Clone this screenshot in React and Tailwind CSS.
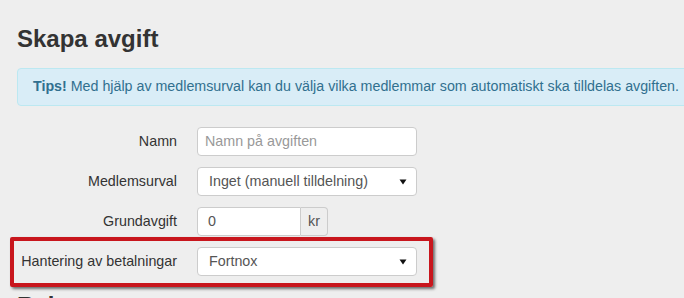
const Caret = () => (
  <svg width="8" height="6" viewBox="0 0 8 6" className="shrink-0">
    <path d="M0.5 0.5 L7.5 0.5 L4 5.5 Z" fill="#111" />
  </svg>
);

const Row = ({ label, children }) => (
  <div className="flex items-center h-[29px] mb-[11px]">
    <label className="w-[160px] text-right text-[14.3px] text-[#333]">{label}</label>
    <div className="ml-[20px] w-[220px] h-full">{children}</div>
  </div>
);

const FakeSelect = ({ value }) => (
  <div className="h-full flex items-center justify-between bg-white border border-[#ccc] rounded-[4px] pl-[11px] pr-[9px] text-[14.3px] text-[#555]">
    <span>{value}</span>
    <Caret />
  </div>
);

export default function App() {
  return (
    <div
      className="relative w-[684px] h-[298px] overflow-hidden bg-[#eeeeee] pl-[17px] pt-[26px]"
      style={{ fontFamily: '"Liberation Sans", Arial, sans-serif' }}
    >
      <h1 className="text-[24px] leading-[26px] font-bold text-[#333]">Skapa avgift</h1>

      <div className="mt-[16px] w-[720px] h-[38px] flex items-center bg-[#d9edf7] border border-[#bce8f1] rounded-[4px] px-[15px] text-[14.25px] text-[#31708f]">
        <span>
          <b>Tips!</b> Med hjälp av medlemsurval kan du välja vilka medlemmar som automatiskt ska tilldelas avgiften.
        </span>
      </div>

      <div className="mt-[21px]">
        <Row label="Namn">
          <div className="h-full flex items-center bg-white border border-[#ccc] rounded-[4px] px-[7px] text-[14.3px] text-[#999]">
            Namn på avgiften
          </div>
        </Row>
        <Row label="Medlemsurval">
          <FakeSelect value="Inget (manuell tilldelning)" />
        </Row>
        <Row label="Grundavgift">
          <div className="h-full flex w-[131px]">
            <div className="flex-1 flex items-center bg-white border border-[#ccc] rounded-l-[4px] px-[10px] text-[14.3px] text-[#555]">
              0
            </div>
            <div className="w-[27px] flex items-center justify-center bg-[#eee] border border-l-0 border-[#ccc] rounded-r-[4px] text-[14.3px] text-[#555]">
              kr
            </div>
          </div>
        </Row>
        <Row label="Hantering av betalningar">
          <FakeSelect value="Fortnox" />
        </Row>
      </div>

      <h2 className="mt-[17px] text-[24px] leading-[26px] font-bold text-[#333]">Rabatter</h2>

      <div className="absolute left-[10px] top-[237px] w-[423px] h-[50px] border-4 border-[#c8161d] rounded-[2px] shadow-[2px_2px_3px_rgba(0,0,0,0.55)]" />
    </div>
  );
}
